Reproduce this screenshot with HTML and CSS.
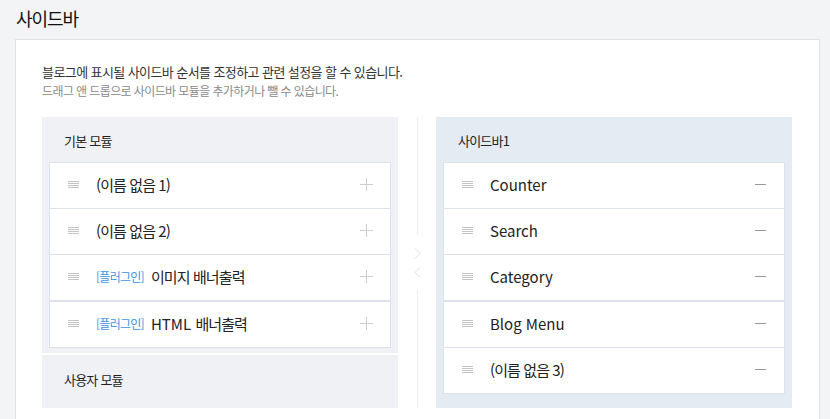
FILE: index.html
```html
<!DOCTYPE html>
<html lang="ko">
<head>
<meta charset="utf-8">
<title>사이드바</title>
<link rel="stylesheet" href="styles.css">
</head>
<body>
<h1 class="page-title ko">사이드바</h1>
<section class="card">
  <p class="desc ko">블로그에 표시될 사이드바 순서를 조정하고 관련 설정을 할 수 있습니다.</p>
  <p class="desc sub ko">드래그 앤 드롭으로 사이드바 모듈을 추가하거나 뺄 수 있습니다.</p>
  <div class="editor">
    <div class="col">
      <div class="panel basic">
        <h2 class="panel-title ko">기본 모듈</h2>
        <ul class="group">
          <li class="item"><span class="handle"></span><span class="name ko">(이름 없음 1)</span><span class="btn plus"></span></li>
          <li class="item"><span class="handle"></span><span class="name ko">(이름 없음 2)</span><span class="btn plus"></span></li>
          <li class="item"><span class="handle"></span><span class="tag ko">[플러그인]</span><span class="name ko">이미지 배너출력</span><span class="btn plus"></span></li>
        </ul>
        <ul class="group">
          <li class="item"><span class="handle"></span><span class="tag ko">[플러그인]</span><span class="name">HTML <span class="ko">배너출력</span></span><span class="btn plus"></span></li>
        </ul>
      </div>
      <div class="panel user">
        <h2 class="panel-title ko">사용자 모듈</h2>
      </div>
    </div>
    <div class="divider">
      <span class="line"></span>
      <span class="arrows">
        <svg width="7" height="11" viewBox="0 0 7 11"><path d="M1 0.5 L6 5.5 L1 10.5" fill="none" stroke="#dcdde0" stroke-width="1"/></svg>
        <svg width="7" height="11" viewBox="0 0 7 11"><path d="M6 0.5 L1 5.5 L6 10.5" fill="none" stroke="#dcdde0" stroke-width="1"/></svg>
      </span>
      <span class="line"></span>
    </div>
    <div class="panel sidebar">
      <h2 class="panel-title ko">사이드바1</h2>
      <ul class="group">
        <li class="item"><span class="handle"></span><span class="name">Counter</span><span class="btn minus"></span></li>
        <li class="item"><span class="handle"></span><span class="name">Search</span><span class="btn minus"></span></li>
        <li class="item"><span class="handle"></span><span class="name">Category</span><span class="btn minus"></span></li>
      </ul>
      <ul class="group">
        <li class="item"><span class="handle"></span><span class="name">Blog Menu</span><span class="btn minus"></span></li>
        <li class="item"><span class="handle"></span><span class="name ko">(이름 없음 3)</span><span class="btn minus"></span></li>
      </ul>
    </div>
  </div>
</section>
</body>
</html>
```

FILE: styles.css
```css
* { box-sizing: border-box; }

body {
  margin: 0;
  background: #f3f4f6;
  font-family: "Noto Sans CJK KR", "Noto Sans", sans-serif;
  color: #222;
  overflow: hidden;
}

.ko { letter-spacing: -0.06em; }

.page-title {
  margin: 0;
  padding: 6px 16px 9px;
  font-size: 18px;
  line-height: 24px;
  font-weight: 400;
  color: #111;
}

.card {
  margin-left: 15px;
  width: 805px;
  background: #fff;
  border: 1px solid #dfe1e5;
  padding: 22px 26px 40px;
}

.desc {
  margin: 0;
  font-size: 13px;
  line-height: 19px;
  color: #333;
  letter-spacing: -0.045em;
}

.desc.sub {
  font-size: 12px;
  color: #8a8a8a;
  letter-spacing: -0.05em;
}

.editor {
  display: flex;
  margin-top: 17px;
}

.col {
  display: flex;
  flex-direction: column;
  gap: 2px;
  width: 356px;
}

.panel {
  width: 356px;
  background: #eff1f5;
}

.panel.basic { padding: 0 7px 5px; }
.panel.user { height: 53px; }
.panel.sidebar {
  background: #e5ebf2;
  padding: 0 7px 14px;
}

.panel-title {
  margin: 0;
  height: 45px;
  padding: 14px 15px 0;
  font-size: 13px;
  line-height: 20px;
  font-weight: 400;
  color: #222;
}
.panel.user .panel-title { padding: 15px 22px 0; }

.group {
  list-style: none;
  margin: 0;
  padding: 0;
}

.item {
  display: flex;
  align-items: center;
  height: 47px;
  margin-top: -1px;
  padding: 0 17px 3px 18px;
  background: #fff;
  border: 1px solid #dde1ea;
}
.item:first-child { margin-top: 0; }

.handle {
  width: 11px;
  height: 7px;
  margin-right: 17px;
  background: repeating-linear-gradient(to bottom, #c4c4c4 0 1px, transparent 1px 2px);
}

.name {
  font-size: 15px;
  color: #222;
}

.tag {
  font-size: 12px;
  color: #3d95e6;
  margin-right: 7px;
}

.btn {
  margin-left: auto;
  position: relative;
  width: 13px;
  height: 13px;
}
.btn::before, .btn::after {
  content: "";
  position: absolute;
  background: #cdcdcd;
}
.plus::before { left: 0; right: 0; top: 6px; height: 1px; }
.plus::after { top: 0; bottom: 0; left: 6px; width: 1px; }
.minus { width: 11px; margin-right: 1px; }
.minus::before { left: 0; right: 0; top: 6px; height: 1px; background: #9a9a9a; }
.minus::after { display: none; }

.divider {
  width: 38px;
  display: flex;
  flex-direction: column;
  align-items: center;
}
.divider .line {
  flex: 1;
  width: 1px;
  background: #eeeff2;
}
.arrows {
  height: 55px;
  display: flex;
  flex-direction: column;
  align-items: center;
  justify-content: center;
  gap: 8px;
}
.arrows svg { display: block; }
```
